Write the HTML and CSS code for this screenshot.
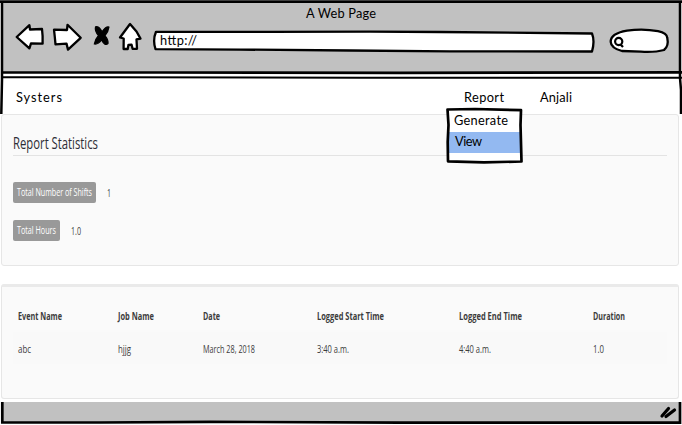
FILE: index.html
```html
<!DOCTYPE html>
<html lang="en">
<head>
<meta charset="utf-8">
<title>A Web Page</title>
<link rel="stylesheet" href="styles.css">
</head>
<body>
<header class="chrome">
  <svg class="frame" width="682" height="114" viewBox="0 0 682 114">
    <path fill="#c1c1c1" d="M2 2H681V72H2z"/>
    <path class="edge" d="M0 1.7H682M2 72.500H160L400 72.800 682 72.300"/>
    <path class="edge thin" d="M2 77.2H120L360 77.7H682"/>
    <path class="side" d="M2 2V80L1.3 114M680 2V78L681 90V114"/>
  </svg>
  <h1 class="title"><svg class="sketch" width="71" height="20"><text x="0" y="15" textLength="70">A Web Page</text></svg></h1>
  <div class="toolbar">
    <svg class="icon back" width="30" height="28" viewBox="15 23 30 28"><path d="M16.7 37 29.4 25.2 30 29.5 42 29 42.6 36V43.7L31 43.4 29.4 48.4z"/></svg>
    <svg class="icon forward" width="32" height="30" viewBox="52 22 32 30"><path d="M54 29.7 67 30 67.5 24.8 80.7 37.8 68 49.6 66.5 43.6 55.5 44.4 54.8 37z"/></svg>
    <svg class="icon stop" width="18" height="22" viewBox="93 25 18 22"><path d="M95.500 26.800Q99 26 102 31.800Q106 26 109 27Q108.500 31.500 105 35.500Q108.500 40 108 43.500Q105 46.500 101.500 40Q98 44.800 94.300 44Q95 39.500 98.500 35.500Q94.500 31 95.500 26.800z"/></svg>
    <svg class="icon home" width="25" height="30" viewBox="118 22 25 30"><path d="M130 24 120 37.500 123.700 38.500 123.600 49H127.700L128.500 44.800 131.500 44.600 132.600 48.800H137L136.500 39.400 140.500 38.600 136.500 31.500z"/></svg>
    <div class="address">
      <svg class="shape" width="444" height="24" viewBox="152 29 444 24"><path d="M156 31.800 270 31.900 370 31.700 440 32 592 33.500Q595 41 592 51.500L450 51.300 350 50.500 240 49.600 155.500 49.200Q152.500 40 156 31.800z"/></svg>
      <svg class="sketch url" width="37" height="18"><text x="0" y="13" textLength="37">http://</text></svg>
    </div>
    <svg class="search" width="62" height="27" viewBox="608 28 62 27"><path d="M627 30.700Q643 28.400 658 31.200Q667 33 667.300 38Q669 46 664 50Q655 52.500 641 51.700L622 51Q611 48 610.700 42Q610.500 33.500 627 30.700z"/><circle cx="618.700" cy="41.500" r="3.600"/><path d="m620.500 44.500 2.500 2.500"/></svg>
  </div>
  <nav class="nav">
    <svg class="sketch brand" width="46" height="20"><text x="0" y="15" textLength="46">Systers</text></svg>
    <div class="menu">
      <svg class="sketch" width="40" height="20"><text x="0" y="15" textLength="40">Report</text></svg>
      <div class="dropdown">
        <div class="item"><svg class="sketch" width="54" height="20"><text x="0" y="14" textLength="54">Generate</text></svg></div>
        <div class="item active"><svg class="sketch" width="27" height="20"><text x="0" y="14" textLength="27">View</text></svg></div>
        <svg class="outline" width="78" height="57" viewBox="446 107 78 57"><path d="M447.500 109.500 475 109 521 110.200 520.500 125 521.500 161.500 484 162.300 448 161.300 447.700 142 448.500 125z"/></svg>
      </div>
    </div>
    <svg class="sketch" width="32" height="20"><text x="0" y="15" textLength="32">Anjali</text></svg>
  </nav>
</header>
<main>
  <section class="panel stats">
    <h2><svg class="narrow" width="85" height="20"><text x="0" y="15" textLength="85" lengthAdjust="spacingAndGlyphs">Report Statistics</text></svg></h2>
    <div class="stat"><span class="badge"><svg class="narrow" width="75" height="14"><text x="0" y="11" textLength="75" lengthAdjust="spacingAndGlyphs">Total Number of Shifts</text></svg></span><svg class="narrow" width="4" height="14"><text x="0" y="10.500" textLength="4" lengthAdjust="spacingAndGlyphs">1</text></svg></div>
    <div class="stat"><span class="badge"><svg class="narrow" width="39" height="14"><text x="0" y="11" textLength="39" lengthAdjust="spacingAndGlyphs">Total Hours</text></svg></span><svg class="narrow" width="10" height="14"><text x="0" y="10.500" textLength="10" lengthAdjust="spacingAndGlyphs">1.0</text></svg></div>
  </section>
  <section class="panel log">
    <div class="row head">
      <svg class="narrow" width="44" height="14"><text y="11" textLength="44" lengthAdjust="spacingAndGlyphs">Event Name</text></svg>
      <svg class="narrow" width="36" height="14"><text y="11" textLength="36" lengthAdjust="spacingAndGlyphs">Job Name</text></svg>
      <svg class="narrow" width="17" height="14"><text y="11" textLength="17" lengthAdjust="spacingAndGlyphs">Date</text></svg>
      <svg class="narrow" width="67" height="14"><text y="11" textLength="67" lengthAdjust="spacingAndGlyphs">Logged Start Time</text></svg>
      <svg class="narrow" width="63" height="14"><text y="11" textLength="63" lengthAdjust="spacingAndGlyphs">Logged End Time</text></svg>
      <svg class="narrow" width="32" height="14"><text y="11" textLength="32" lengthAdjust="spacingAndGlyphs">Duration</text></svg>
    </div>
    <div class="row entry">
      <svg class="narrow" width="13" height="14"><text y="11" textLength="13" lengthAdjust="spacingAndGlyphs">abc</text></svg>
      <svg class="narrow" width="13" height="14"><text y="11" textLength="13" lengthAdjust="spacingAndGlyphs">hjjg</text></svg>
      <svg class="narrow" width="52" height="14"><text y="11" textLength="52" lengthAdjust="spacingAndGlyphs">March 28, 2018</text></svg>
      <svg class="narrow" width="32" height="14"><text y="11" textLength="32" lengthAdjust="spacingAndGlyphs">3:40 a.m.</text></svg>
      <svg class="narrow" width="32" height="14"><text y="11" textLength="32" lengthAdjust="spacingAndGlyphs">4:40 a.m.</text></svg>
      <svg class="narrow" width="11" height="14"><text y="11" textLength="11" lengthAdjust="spacingAndGlyphs">1.0</text></svg>
    </div>
  </section>
</main>
<footer class="status">
  <svg width="682" height="23" viewBox="0 402 682 23">
    <path fill="#c1c1c1" d="M2 402H680V422H2z"/>
    <path class="edge" d="M2.300 402V422.500H100L210 421.800 400 422.700H680V402"/>
    <path class="grip" d="m662 416 6.500-7.500M666 416.500l8.500-6.500"/>
  </svg>
</footer>
</body>
</html>
```

FILE: styles.css
```css
* { box-sizing: border-box; }
body {
  margin: 0;
  width: 682px;
  height: 425px;
  overflow: hidden;
  background: #fff;
  display: flex;
  flex-direction: column;
}
svg { display: block; flex: none; overflow: visible; }
h1, h2 { margin: 0; font-weight: normal; }

.chrome { height: 114px; position: relative; z-index: 1; flex: none; }
.frame { position: absolute; left: 0; top: 0; z-index: -1; }
.edge, .side { fill: none; stroke: #000; stroke-width: 2.7; }
.thin { stroke-width: 2; }
.side { stroke-width: 2.5; }
.sketch { font: 12.8px Lato, sans-serif; }
.title { height: 22px; padding: 3px 0 0 306px; }

.toolbar { height: 32px; display: flex; align-items: flex-start; }
.icon path, .shape path, .search path {
  fill: #fff;
  stroke: #000;
  stroke-width: 2.3;
  stroke-linejoin: round;
}
.back { margin: 1px 0 0 15px; }
.forward { margin-left: 7px; }
.stop { margin: 3px 0 0 9px; }
.icon.stop path { fill: #000; stroke-width: 1.2; }
.home { margin-left: 7px; }
.address { width: 444px; height: 24px; margin: 7px 0 0 9px; padding: 3px 0 0 8px; position: relative; }
.shape { position: absolute; left: 0; top: 0; z-index: -1; }
.search { margin: 6px 0 0 12px; fill: none; stroke: #000; stroke-width: 2.2; }

.nav { height: 35px; margin-top: 25px; padding: 8px 0 0 16px; display: flex; }
.brand { margin-right: 402px; }
.menu { position: relative; margin-right: 36px; }
.dropdown {
  position: absolute;
  left: -16px;
  top: 22px;
  width: 73px;
  height: 53px;
  padding-top: 2px;
  background: #fff;
}
.item { height: 21px; padding-left: 6px; }
.active { background: #93b9f1; padding-left: 7px; }
.outline { position: absolute; left: -2px; top: -2px; fill: none; stroke: #000; stroke-width: 2.7; stroke-linejoin: round; }

.panel {
  width: 678px;
  margin-left: 1px;
  border: 1px solid #e6e6e6;
  border-radius: 3px;
  background: #fafafa;
}
.narrow { font: 11.2px "Open Sans", sans-serif; fill: #3c3c3c; }
.stats { height: 152px; padding: 19px 11px 0; }
h2 { height: 22px; border-bottom: 1px solid #e3e3e3; margin-bottom: 26px; }
h2 .narrow { font-size: 16.5px; fill: #2d2d35; }
.stat { display: flex; align-items: center; gap: 11px; height: 21px; margin-bottom: 17px; }
.badge { height: 21px; padding: 3px 4px 0; background: #999; border-radius: 2px; }
.badge .narrow { fill: #fff; }
.log { height: 115px; margin-top: 18px; padding: 20px 11px 0; border-top: 3px solid #eaeaea; }
.row {
  display: grid;
  grid-template-columns: 100px 85px 114px 142px 134px 1fr;
  padding-left: 5px;
}
.head { height: 25px; padding-top: 2px; }
.head .narrow { font-weight: 700; font-size: 10.5px; }
.entry { height: 32px; padding-top: 10px; background: #f9f9f9; }
.status { margin-top: 3px; }
.grip { stroke: #000; stroke-width: 3.2; stroke-linecap: round; }
```
